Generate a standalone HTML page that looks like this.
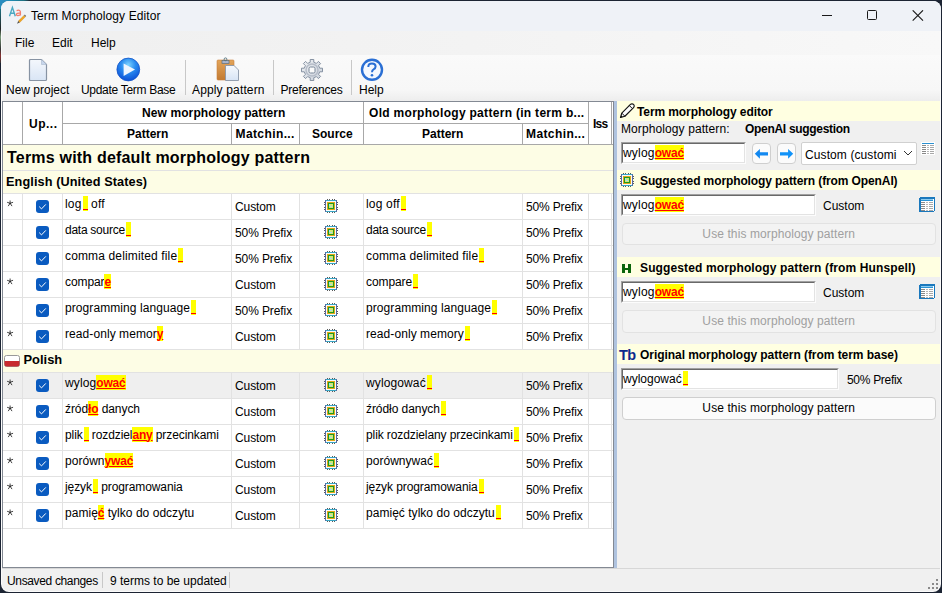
<!DOCTYPE html><html><head><meta charset="utf-8"><style>
*{box-sizing:border-box;margin:0;padding:0}
html,body{width:942px;height:593px;overflow:hidden;background:#1c2433;font-family:"Liberation Sans",sans-serif;font-size:12px;color:#000;position:relative}
.a{position:absolute}
.t{position:absolute;white-space:nowrap}
.b{font-weight:bold}
.hl{background:#ffff00;color:#ff0000;padding:1.2px 0 0.2px;text-decoration:underline;text-decoration-color:#ff0000;text-decoration-thickness:1px;text-underline-offset:0.7px;font-weight:bold;letter-spacing:-0.2px}
.hu{display:inline-block;width:5px;height:0;position:relative;margin-left:1px}
.hu:before{content:"";position:absolute;left:0;top:-12px;width:5px;height:15px;background:#ff0}
.hu:after{content:"";position:absolute;left:0;top:1px;width:5px;height:1px;background:#f00}
</style></head><body>
<div class="a" style="left:0px;top:0px;width:30px;height:1px;background:linear-gradient(90deg,#2a8fc8,#1f8ab0 40%,#1d6f80 80%,#1c2433)"></div>
<div class="a" style="left:0px;top:0px;width:9px;height:9px;background:linear-gradient(135deg,#2a8fc8,#23809f)"></div>
<div class="a" style="left:0px;top:9px;width:1px;height:40px;background:linear-gradient(#1d6f80,#222 50%,#7a9a7a 70%,#333)"></div>
<div class="a" style="left:0px;top:49px;width:1px;height:14px;background:linear-gradient(#333,#8a3030 50%,#333)"></div>
<div class="a" style="left:1px;top:1px;width:940px;height:591px;background:#fbfbfb;border-radius:8px"></div>
<div class="a" style="left:2px;top:1px;width:938px;height:590px;background:#f0f0f0;border-radius:8px 8px 7px 7px"></div>
<div class="a" style="left:1px;top:1px;width:940px;height:30px;background:#eff2f7;border-radius:8px 8px 0 0"></div>
<div class="t " style="left:31px;top:8.84px;line-height:14px;font-size:12px;letter-spacing:0.1px">Term Morphology Editor</div>
<div class="a" style="left:2px;top:31px;width:938px;height:24px;background:linear-gradient(90deg,#efefef,#f3f3f3 50%,#f8f8f8)"></div>
<div class="t " style="left:15px;top:35.84px;line-height:14px;font-size:12px;">File</div>
<div class="t " style="left:52px;top:35.84px;line-height:14px;font-size:12px;">Edit</div>
<div class="t " style="left:91px;top:35.84px;line-height:14px;font-size:12px;">Help</div>
<div class="a" style="left:2px;top:55px;width:938px;height:46px;background:linear-gradient(#fafafa,#f7f7f7 75%,#ededed)"></div>
<div class="t " style="left:6px;top:82.84px;line-height:14px;font-size:12px;">New project</div>
<div class="t " style="left:81px;top:82.84px;line-height:14px;font-size:12px;letter-spacing:-0.3px">Update Term Base</div>
<div class="t " style="left:192px;top:82.84px;line-height:14px;font-size:12px;letter-spacing:0.15px">Apply pattern</div>
<div class="t " style="left:280.5px;top:82.84px;line-height:14px;font-size:12px;letter-spacing:-0.25px">Preferences</div>
<div class="t " style="left:359px;top:82.84px;line-height:14px;font-size:12px;">Help</div>
<svg class="a" style="left:7px;top:5px" width="20" height="20" viewBox="0 0 20 20"><path d="M2.5 11.3 L5.4 2.4 L8.3 11.3 M3.5 8.3 H7.3" fill="none" stroke="#4aa8c2" stroke-width="1.4"/><path d="M9.6 5.6 Q13 4.4 13.4 6.8 V10.6 M13.4 8.2 Q9.3 7.8 9.4 9.6 Q9.8 11.4 13.4 9.8" fill="none" stroke="#f47e6c" stroke-width="1.3"/><path d="M11.3 16.1 L17 10.4 L18.4 11.8 L12.7 17.5 Z" fill="#f2a81e" stroke="#c47a18" stroke-width="0.4"/><path d="M17 10.4 L17.8 9.6 L19.2 11 L18.4 11.8 Z" fill="#6a6a6a"/><path d="M11.3 16.1 L10 18.8 L12.7 17.5 Z" fill="#505050"/></svg>
<div class="a" style="left:822px;top:15px;width:10px;height:1px;background:#1a1a1a"></div>
<div class="a" style="left:867px;top:10px;width:10px;height:10px;border:1px solid #1a1a1a;border-radius:1.5px"></div>
<svg class="a" style="left:912px;top:10px" width="12" height="11" viewBox="0 0 12 11"><path d="M0.7 0.3 L11 10.6 M11 0.3 L0.7 10.6" stroke="#1a1a1a" stroke-width="1.1"/></svg>
<svg class="a" style="left:28px;top:58px" width="20" height="24" viewBox="0 0 20 24"><defs><linearGradient id="pg" x1="0" y1="0" x2="0" y2="1"><stop offset="0" stop-color="#f4f7fc"/><stop offset="1" stop-color="#d9e5f5"/></linearGradient></defs><path d="M1.5 2.5 Q1.5 1.5 2.5 1.5 H13.5 L18.5 6.5 V21.5 Q18.5 22.5 17.5 22.5 H2.5 Q1.5 22.5 1.5 21.5 Z" fill="url(#pg)" stroke="#8793a3" stroke-width="1.2"/><path d="M13.5 1.5 V6.5 H18.5" fill="#c7d6ec" stroke="#a9b8cc" stroke-width="0.6"/></svg>
<svg class="a" style="left:116px;top:57px" width="25" height="25" viewBox="0 0 25 25"><defs><radialGradient id="pl" cx="0.5" cy="0.3" r="0.7"><stop offset="0" stop-color="#7fd4ff"/><stop offset="0.45" stop-color="#2a8cf0"/><stop offset="1" stop-color="#0b4fd6"/></radialGradient></defs><circle cx="12.3" cy="12.5" r="11.4" fill="url(#pl)" stroke="#1556c8" stroke-width="0.8"/><path d="M7.6 6.5 L19 12.6 L7.6 19 Z" fill="#eef5ff"/></svg>
<svg class="a" style="left:216px;top:57px" width="24" height="25" viewBox="0 0 24 25"><defs><linearGradient id="cb" x1="0" y1="0" x2="0" y2="1"><stop offset="0" stop-color="#e3a55a"/><stop offset="1" stop-color="#c27a32"/></linearGradient><linearGradient id="pg2" x1="0" y1="0" x2="0" y2="1"><stop offset="0" stop-color="#f6f9fd"/><stop offset="1" stop-color="#d7e4f5"/></linearGradient></defs><rect x="1" y="3" width="17" height="20" rx="1" fill="url(#cb)" stroke="#c9803c" stroke-width="0.6"/><rect x="6" y="3.5" width="7" height="3" fill="#a9b4cc" stroke="#60707a" stroke-width="0.7"/><circle cx="9.5" cy="2.3" r="1.4" fill="none" stroke="#50707a" stroke-width="0.9"/><path d="M9.5 8.5 H18 L22.5 13 V23.5 H9.5 Z" fill="url(#pg2)" stroke="#8a96a8" stroke-width="0.9"/></svg>
<svg class="a" style="left:300px;top:58px" width="24" height="24" viewBox="0 0 24 24"><defs><linearGradient id="gr" x1="0" y1="0" x2="1" y2="1"><stop offset="0" stop-color="#eef0f3"/><stop offset="1" stop-color="#c9d0da"/></linearGradient></defs><path d="M10.2 1.5 H13.8 V4.3 L16.4 5.4 L18.4 3.4 L20.6 5.6 L18.6 7.6 L19.7 10.2 H22.5 V13.8 H19.7 L18.6 16.4 L20.6 18.4 L18.4 20.6 L16.4 18.6 L13.8 19.7 V22.5 H10.2 V19.7 L7.6 18.6 L5.6 20.6 L3.4 18.4 L5.4 16.4 L4.3 13.8 H1.5 V10.2 H4.3 L5.4 7.6 L3.4 5.6 L5.6 3.4 L7.6 5.4 L10.2 4.3 Z" fill="url(#gr)" stroke="#7b889a" stroke-width="0.9"/><circle cx="12" cy="12" r="6" fill="none" stroke="#b5bcc8" stroke-width="1.5"/><rect x="9" y="9" width="6" height="6" rx="1.5" fill="#fafafa" stroke="#7b889a" stroke-width="1"/></svg>
<svg class="a" style="left:360px;top:58px" width="24" height="24" viewBox="0 0 24 24"><circle cx="12" cy="11.8" r="10" fill="#f4f8fe" stroke="#2a6fd4" stroke-width="2.4"/><path d="M8.3 9 Q8.3 5.6 12 5.6 Q15.6 5.6 15.6 8.6 Q15.6 10.4 13.6 11.4 Q12 12.2 12 14.2" fill="none" stroke="#2a6fd4" stroke-width="2"/><circle cx="12" cy="17.2" r="1.3" fill="#2a6fd4"/></svg>
<div class="a" style="left:185px;top:60px;width:1px;height:35px;background:#c8c8c8"></div>
<div class="a" style="left:273px;top:60px;width:1px;height:35px;background:#c8c8c8"></div>
<div class="a" style="left:351px;top:60px;width:1px;height:35px;background:#c8c8c8"></div>
<div class="a" style="left:2px;top:101px;width:612px;height:467px;background:#fff;border:1px solid #838993"></div>
<div class="a" style="left:3px;top:144px;width:610px;height:1px;background:#a8a8a8"></div>
<div class="a" style="left:62px;top:123px;width:526px;height:1px;background:#a8a8a8"></div>
<div class="a" style="left:22px;top:102px;width:1px;height:42px;background:#a8a8a8"></div>
<div class="a" style="left:62px;top:102px;width:1px;height:42px;background:#a8a8a8"></div>
<div class="a" style="left:231px;top:124px;width:1px;height:20px;background:#a8a8a8"></div>
<div class="a" style="left:299px;top:124px;width:1px;height:20px;background:#a8a8a8"></div>
<div class="a" style="left:363px;top:102px;width:1px;height:42px;background:#a8a8a8"></div>
<div class="a" style="left:522px;top:124px;width:1px;height:20px;background:#a8a8a8"></div>
<div class="a" style="left:588px;top:102px;width:1px;height:42px;background:#a8a8a8"></div>
<div class="a" style="left:611px;top:102px;width:1px;height:42px;background:#a8a8a8"></div>
<div class="t b" style="left:29px;top:116.84px;line-height:14px;font-size:12px;letter-spacing:0.5px">Up...</div>
<div class="t b" style="left:142px;top:105.84px;line-height:14px;font-size:12px;letter-spacing:0.1px">New morphology pattern</div>
<div class="t b" style="left:369px;top:105.84px;line-height:14px;font-size:12px;letter-spacing:0.3px">Old morphology pattern (in term b...</div>
<div class="t b" style="left:127px;top:126.84px;line-height:14px;font-size:12px;">Pattern</div>
<div class="t b" style="left:235.5px;top:126.84px;line-height:14px;font-size:12px;letter-spacing:0.4px">Matchin...</div>
<div class="t b" style="left:312px;top:126.84px;line-height:14px;font-size:12px;">Source</div>
<div class="t b" style="left:422px;top:126.84px;line-height:14px;font-size:12px;">Pattern</div>
<div class="t b" style="left:526px;top:126.84px;line-height:14px;font-size:12px;letter-spacing:0.4px">Matchin...</div>
<div class="t b" style="left:593px;top:116.84px;line-height:14px;font-size:12px;letter-spacing:-0.8px">Iss</div>
<div class="a" style="left:3px;top:145px;width:610px;height:25px;background:#fdfde5"></div>
<div class="a" style="left:3px;top:170px;width:610px;height:1px;background:#e2e2e2"></div>
<div class="t b" style="left:7px;top:149.46px;line-height:18px;font-size:16px;letter-spacing:0.2px">Terms with default morphology pattern</div>
<div class="a" style="left:3px;top:171px;width:610px;height:22px;background:#fdfde5"></div>
<div class="a" style="left:3px;top:193px;width:610px;height:1px;background:#e2e2e2"></div>
<div class="t b" style="left:6px;top:173.60px;line-height:16px;font-size:12.7px;letter-spacing:0.1px">English (United States)</div>
<div class="a" style="left:3px;top:219px;width:610px;height:1px;background:#e2e2e2"></div>
<div class="a" style="left:22px;top:194px;width:1px;height:25px;background:#e2e2e2"></div>
<div class="a" style="left:62px;top:194px;width:1px;height:25px;background:#e2e2e2"></div>
<div class="a" style="left:231px;top:194px;width:1px;height:25px;background:#e2e2e2"></div>
<div class="a" style="left:299px;top:194px;width:1px;height:25px;background:#e2e2e2"></div>
<div class="a" style="left:363px;top:194px;width:1px;height:25px;background:#e2e2e2"></div>
<div class="a" style="left:522px;top:194px;width:1px;height:25px;background:#e2e2e2"></div>
<div class="a" style="left:588px;top:194px;width:1px;height:25px;background:#e2e2e2"></div>
<div class="a" style="left:611px;top:194px;width:1px;height:25px;background:#e2e2e2"></div>
<svg class="a" style="left:6px;top:200px" width="9" height="8" viewBox="0 0 9 8"><path d="M4.1 3.3 V0.9 M4.1 3.3 L1.5 2.4 M4.1 3.3 L6.7 2.4 M4.1 3.3 L2.4 5.8 M4.1 3.3 L5.8 5.8" stroke="#222" stroke-width="0.85" stroke-linecap="round"/></svg>
<svg class="a" style="left:36px;top:200px" width="13" height="13" viewBox="0 0 13 13"><rect x="0" y="0" width="13" height="13" rx="3" fill="#0a5bc0"/><path d="M3.2 6.6 L5.5 8.9 L9.8 4.4" fill="none" stroke="#fff" stroke-width="1"/></svg>
<div class="t " style="left:65px;top:196.84px;line-height:14px;font-size:12px;letter-spacing:0.188px">log<span class="hu"></span> off</div>
<div class="t " style="left:235px;top:199.84px;line-height:14px;font-size:12px;letter-spacing:-0.1px">Custom</div>
<svg class="a" style="left:324px;top:199px" width="14" height="14" viewBox="0 0 14 14" shape-rendering="crispEdges"><path d="M3 0h1v1h-1zM5 0h1v1h-1zM8 0h1v1h-1zM10 0h1v1h-1zM3 13h1v1h-1zM5 13h1v1h-1zM8 13h1v1h-1zM10 13h1v1h-1zM0 3h1v1h-1zM0 5h1v1h-1zM0 8h1v1h-1zM0 10h1v1h-1zM13 3h1v1h-1zM13 5h1v1h-1zM13 8h1v1h-1zM13 10h1v1h-1z" fill="#5a5a5a"/><rect x="1" y="1" width="12" height="12" fill="#5a6aa0"/><rect x="2" y="1" width="10" height="1" fill="#3aa6c4"/><rect x="2" y="12" width="10" height="1" fill="#3aa6c4"/><rect x="2" y="2" width="10" height="10" fill="#fbfbfb"/><rect x="3" y="3" width="8" height="8" fill="#e0a818"/><rect x="4" y="4" width="6" height="6" fill="#209a20"/><rect x="5" y="5" width="4" height="4" fill="#d2e878"/><rect x="5" y="5" width="1" height="2" fill="#9fe3f5"/><rect x="6" y="7" width="2" height="1" fill="#a9dcf0"/></svg>
<div class="t " style="left:366px;top:196.84px;line-height:14px;font-size:12px;letter-spacing:0.188px">log off<span class="hu"></span></div>
<div class="t " style="left:526px;top:199.84px;line-height:14px;font-size:12px;letter-spacing:-0.15px">50% Prefix</div>
<div class="a" style="left:3px;top:245px;width:610px;height:1px;background:#e2e2e2"></div>
<div class="a" style="left:22px;top:220px;width:1px;height:25px;background:#e2e2e2"></div>
<div class="a" style="left:62px;top:220px;width:1px;height:25px;background:#e2e2e2"></div>
<div class="a" style="left:231px;top:220px;width:1px;height:25px;background:#e2e2e2"></div>
<div class="a" style="left:299px;top:220px;width:1px;height:25px;background:#e2e2e2"></div>
<div class="a" style="left:363px;top:220px;width:1px;height:25px;background:#e2e2e2"></div>
<div class="a" style="left:522px;top:220px;width:1px;height:25px;background:#e2e2e2"></div>
<div class="a" style="left:588px;top:220px;width:1px;height:25px;background:#e2e2e2"></div>
<div class="a" style="left:611px;top:220px;width:1px;height:25px;background:#e2e2e2"></div>
<svg class="a" style="left:36px;top:226px" width="13" height="13" viewBox="0 0 13 13"><rect x="0" y="0" width="13" height="13" rx="3" fill="#0a5bc0"/><path d="M3.2 6.6 L5.5 8.9 L9.8 4.4" fill="none" stroke="#fff" stroke-width="1"/></svg>
<div class="t " style="left:65px;top:222.84px;line-height:14px;font-size:12px;letter-spacing:-0.265px">data source<span class="hu"></span></div>
<div class="t " style="left:235px;top:225.84px;line-height:14px;font-size:12px;letter-spacing:-0.1px">50% Prefix</div>
<svg class="a" style="left:324px;top:225px" width="14" height="14" viewBox="0 0 14 14" shape-rendering="crispEdges"><path d="M3 0h1v1h-1zM5 0h1v1h-1zM8 0h1v1h-1zM10 0h1v1h-1zM3 13h1v1h-1zM5 13h1v1h-1zM8 13h1v1h-1zM10 13h1v1h-1zM0 3h1v1h-1zM0 5h1v1h-1zM0 8h1v1h-1zM0 10h1v1h-1zM13 3h1v1h-1zM13 5h1v1h-1zM13 8h1v1h-1zM13 10h1v1h-1z" fill="#5a5a5a"/><rect x="1" y="1" width="12" height="12" fill="#5a6aa0"/><rect x="2" y="1" width="10" height="1" fill="#3aa6c4"/><rect x="2" y="12" width="10" height="1" fill="#3aa6c4"/><rect x="2" y="2" width="10" height="10" fill="#fbfbfb"/><rect x="3" y="3" width="8" height="8" fill="#e0a818"/><rect x="4" y="4" width="6" height="6" fill="#209a20"/><rect x="5" y="5" width="4" height="4" fill="#d2e878"/><rect x="5" y="5" width="1" height="2" fill="#9fe3f5"/><rect x="6" y="7" width="2" height="1" fill="#a9dcf0"/></svg>
<div class="t " style="left:366px;top:222.84px;line-height:14px;font-size:12px;letter-spacing:-0.265px">data source<span class="hu"></span></div>
<div class="t " style="left:526px;top:225.84px;line-height:14px;font-size:12px;letter-spacing:-0.15px">50% Prefix</div>
<div class="a" style="left:3px;top:271px;width:610px;height:1px;background:#e2e2e2"></div>
<div class="a" style="left:22px;top:246px;width:1px;height:25px;background:#e2e2e2"></div>
<div class="a" style="left:62px;top:246px;width:1px;height:25px;background:#e2e2e2"></div>
<div class="a" style="left:231px;top:246px;width:1px;height:25px;background:#e2e2e2"></div>
<div class="a" style="left:299px;top:246px;width:1px;height:25px;background:#e2e2e2"></div>
<div class="a" style="left:363px;top:246px;width:1px;height:25px;background:#e2e2e2"></div>
<div class="a" style="left:522px;top:246px;width:1px;height:25px;background:#e2e2e2"></div>
<div class="a" style="left:588px;top:246px;width:1px;height:25px;background:#e2e2e2"></div>
<div class="a" style="left:611px;top:246px;width:1px;height:25px;background:#e2e2e2"></div>
<svg class="a" style="left:36px;top:252px" width="13" height="13" viewBox="0 0 13 13"><rect x="0" y="0" width="13" height="13" rx="3" fill="#0a5bc0"/><path d="M3.2 6.6 L5.5 8.9 L9.8 4.4" fill="none" stroke="#fff" stroke-width="1"/></svg>
<div class="t " style="left:65px;top:248.84px;line-height:14px;font-size:12px;letter-spacing:0.141px">comma delimited file<span class="hu"></span></div>
<div class="t " style="left:235px;top:251.84px;line-height:14px;font-size:12px;letter-spacing:-0.1px">50% Prefix</div>
<svg class="a" style="left:324px;top:251px" width="14" height="14" viewBox="0 0 14 14" shape-rendering="crispEdges"><path d="M3 0h1v1h-1zM5 0h1v1h-1zM8 0h1v1h-1zM10 0h1v1h-1zM3 13h1v1h-1zM5 13h1v1h-1zM8 13h1v1h-1zM10 13h1v1h-1zM0 3h1v1h-1zM0 5h1v1h-1zM0 8h1v1h-1zM0 10h1v1h-1zM13 3h1v1h-1zM13 5h1v1h-1zM13 8h1v1h-1zM13 10h1v1h-1z" fill="#5a5a5a"/><rect x="1" y="1" width="12" height="12" fill="#5a6aa0"/><rect x="2" y="1" width="10" height="1" fill="#3aa6c4"/><rect x="2" y="12" width="10" height="1" fill="#3aa6c4"/><rect x="2" y="2" width="10" height="10" fill="#fbfbfb"/><rect x="3" y="3" width="8" height="8" fill="#e0a818"/><rect x="4" y="4" width="6" height="6" fill="#209a20"/><rect x="5" y="5" width="4" height="4" fill="#d2e878"/><rect x="5" y="5" width="1" height="2" fill="#9fe3f5"/><rect x="6" y="7" width="2" height="1" fill="#a9dcf0"/></svg>
<div class="t " style="left:366px;top:248.84px;line-height:14px;font-size:12px;letter-spacing:0.141px">comma delimited file<span class="hu"></span></div>
<div class="t " style="left:526px;top:251.84px;line-height:14px;font-size:12px;letter-spacing:-0.15px">50% Prefix</div>
<div class="a" style="left:3px;top:297px;width:610px;height:1px;background:#e2e2e2"></div>
<div class="a" style="left:22px;top:272px;width:1px;height:25px;background:#e2e2e2"></div>
<div class="a" style="left:62px;top:272px;width:1px;height:25px;background:#e2e2e2"></div>
<div class="a" style="left:231px;top:272px;width:1px;height:25px;background:#e2e2e2"></div>
<div class="a" style="left:299px;top:272px;width:1px;height:25px;background:#e2e2e2"></div>
<div class="a" style="left:363px;top:272px;width:1px;height:25px;background:#e2e2e2"></div>
<div class="a" style="left:522px;top:272px;width:1px;height:25px;background:#e2e2e2"></div>
<div class="a" style="left:588px;top:272px;width:1px;height:25px;background:#e2e2e2"></div>
<div class="a" style="left:611px;top:272px;width:1px;height:25px;background:#e2e2e2"></div>
<svg class="a" style="left:6px;top:278px" width="9" height="8" viewBox="0 0 9 8"><path d="M4.1 3.3 V0.9 M4.1 3.3 L1.5 2.4 M4.1 3.3 L6.7 2.4 M4.1 3.3 L2.4 5.8 M4.1 3.3 L5.8 5.8" stroke="#222" stroke-width="0.85" stroke-linecap="round"/></svg>
<svg class="a" style="left:36px;top:278px" width="13" height="13" viewBox="0 0 13 13"><rect x="0" y="0" width="13" height="13" rx="3" fill="#0a5bc0"/><path d="M3.2 6.6 L5.5 8.9 L9.8 4.4" fill="none" stroke="#fff" stroke-width="1"/></svg>
<div class="t " style="left:65px;top:274.84px;line-height:14px;font-size:12px;letter-spacing:-0.098px">compar<span class="hl">e</span></div>
<div class="t " style="left:235px;top:277.84px;line-height:14px;font-size:12px;letter-spacing:-0.1px">Custom</div>
<svg class="a" style="left:324px;top:277px" width="14" height="14" viewBox="0 0 14 14" shape-rendering="crispEdges"><path d="M3 0h1v1h-1zM5 0h1v1h-1zM8 0h1v1h-1zM10 0h1v1h-1zM3 13h1v1h-1zM5 13h1v1h-1zM8 13h1v1h-1zM10 13h1v1h-1zM0 3h1v1h-1zM0 5h1v1h-1zM0 8h1v1h-1zM0 10h1v1h-1zM13 3h1v1h-1zM13 5h1v1h-1zM13 8h1v1h-1zM13 10h1v1h-1z" fill="#5a5a5a"/><rect x="1" y="1" width="12" height="12" fill="#5a6aa0"/><rect x="2" y="1" width="10" height="1" fill="#3aa6c4"/><rect x="2" y="12" width="10" height="1" fill="#3aa6c4"/><rect x="2" y="2" width="10" height="10" fill="#fbfbfb"/><rect x="3" y="3" width="8" height="8" fill="#e0a818"/><rect x="4" y="4" width="6" height="6" fill="#209a20"/><rect x="5" y="5" width="4" height="4" fill="#d2e878"/><rect x="5" y="5" width="1" height="2" fill="#9fe3f5"/><rect x="6" y="7" width="2" height="1" fill="#a9dcf0"/></svg>
<div class="t " style="left:366px;top:274.84px;line-height:14px;font-size:12px;letter-spacing:-0.098px">compare<span class="hu"></span></div>
<div class="t " style="left:526px;top:277.84px;line-height:14px;font-size:12px;letter-spacing:-0.15px">50% Prefix</div>
<div class="a" style="left:3px;top:323px;width:610px;height:1px;background:#e2e2e2"></div>
<div class="a" style="left:22px;top:298px;width:1px;height:25px;background:#e2e2e2"></div>
<div class="a" style="left:62px;top:298px;width:1px;height:25px;background:#e2e2e2"></div>
<div class="a" style="left:231px;top:298px;width:1px;height:25px;background:#e2e2e2"></div>
<div class="a" style="left:299px;top:298px;width:1px;height:25px;background:#e2e2e2"></div>
<div class="a" style="left:363px;top:298px;width:1px;height:25px;background:#e2e2e2"></div>
<div class="a" style="left:522px;top:298px;width:1px;height:25px;background:#e2e2e2"></div>
<div class="a" style="left:588px;top:298px;width:1px;height:25px;background:#e2e2e2"></div>
<div class="a" style="left:611px;top:298px;width:1px;height:25px;background:#e2e2e2"></div>
<svg class="a" style="left:36px;top:304px" width="13" height="13" viewBox="0 0 13 13"><rect x="0" y="0" width="13" height="13" rx="3" fill="#0a5bc0"/><path d="M3.2 6.6 L5.5 8.9 L9.8 4.4" fill="none" stroke="#fff" stroke-width="1"/></svg>
<div class="t " style="left:65px;top:300.84px;line-height:14px;font-size:12px;letter-spacing:0.079px">programming language<span class="hu"></span></div>
<div class="t " style="left:235px;top:303.84px;line-height:14px;font-size:12px;letter-spacing:-0.1px">50% Prefix</div>
<svg class="a" style="left:324px;top:303px" width="14" height="14" viewBox="0 0 14 14" shape-rendering="crispEdges"><path d="M3 0h1v1h-1zM5 0h1v1h-1zM8 0h1v1h-1zM10 0h1v1h-1zM3 13h1v1h-1zM5 13h1v1h-1zM8 13h1v1h-1zM10 13h1v1h-1zM0 3h1v1h-1zM0 5h1v1h-1zM0 8h1v1h-1zM0 10h1v1h-1zM13 3h1v1h-1zM13 5h1v1h-1zM13 8h1v1h-1zM13 10h1v1h-1z" fill="#5a5a5a"/><rect x="1" y="1" width="12" height="12" fill="#5a6aa0"/><rect x="2" y="1" width="10" height="1" fill="#3aa6c4"/><rect x="2" y="12" width="10" height="1" fill="#3aa6c4"/><rect x="2" y="2" width="10" height="10" fill="#fbfbfb"/><rect x="3" y="3" width="8" height="8" fill="#e0a818"/><rect x="4" y="4" width="6" height="6" fill="#209a20"/><rect x="5" y="5" width="4" height="4" fill="#d2e878"/><rect x="5" y="5" width="1" height="2" fill="#9fe3f5"/><rect x="6" y="7" width="2" height="1" fill="#a9dcf0"/></svg>
<div class="t " style="left:366px;top:300.84px;line-height:14px;font-size:12px;letter-spacing:0.079px">programming language<span class="hu"></span></div>
<div class="t " style="left:526px;top:303.84px;line-height:14px;font-size:12px;letter-spacing:-0.15px">50% Prefix</div>
<div class="a" style="left:3px;top:349px;width:610px;height:1px;background:#e2e2e2"></div>
<div class="a" style="left:22px;top:324px;width:1px;height:25px;background:#e2e2e2"></div>
<div class="a" style="left:62px;top:324px;width:1px;height:25px;background:#e2e2e2"></div>
<div class="a" style="left:231px;top:324px;width:1px;height:25px;background:#e2e2e2"></div>
<div class="a" style="left:299px;top:324px;width:1px;height:25px;background:#e2e2e2"></div>
<div class="a" style="left:363px;top:324px;width:1px;height:25px;background:#e2e2e2"></div>
<div class="a" style="left:522px;top:324px;width:1px;height:25px;background:#e2e2e2"></div>
<div class="a" style="left:588px;top:324px;width:1px;height:25px;background:#e2e2e2"></div>
<div class="a" style="left:611px;top:324px;width:1px;height:25px;background:#e2e2e2"></div>
<svg class="a" style="left:6px;top:330px" width="9" height="8" viewBox="0 0 9 8"><path d="M4.1 3.3 V0.9 M4.1 3.3 L1.5 2.4 M4.1 3.3 L6.7 2.4 M4.1 3.3 L2.4 5.8 M4.1 3.3 L5.8 5.8" stroke="#222" stroke-width="0.85" stroke-linecap="round"/></svg>
<svg class="a" style="left:36px;top:330px" width="13" height="13" viewBox="0 0 13 13"><rect x="0" y="0" width="13" height="13" rx="3" fill="#0a5bc0"/><path d="M3.2 6.6 L5.5 8.9 L9.8 4.4" fill="none" stroke="#fff" stroke-width="1"/></svg>
<div class="t " style="left:65px;top:326.84px;line-height:14px;font-size:12px;letter-spacing:0.075px">read-only memor<span class="hl">y</span></div>
<div class="t " style="left:235px;top:329.84px;line-height:14px;font-size:12px;letter-spacing:-0.1px">Custom</div>
<svg class="a" style="left:324px;top:329px" width="14" height="14" viewBox="0 0 14 14" shape-rendering="crispEdges"><path d="M3 0h1v1h-1zM5 0h1v1h-1zM8 0h1v1h-1zM10 0h1v1h-1zM3 13h1v1h-1zM5 13h1v1h-1zM8 13h1v1h-1zM10 13h1v1h-1zM0 3h1v1h-1zM0 5h1v1h-1zM0 8h1v1h-1zM0 10h1v1h-1zM13 3h1v1h-1zM13 5h1v1h-1zM13 8h1v1h-1zM13 10h1v1h-1z" fill="#5a5a5a"/><rect x="1" y="1" width="12" height="12" fill="#5a6aa0"/><rect x="2" y="1" width="10" height="1" fill="#3aa6c4"/><rect x="2" y="12" width="10" height="1" fill="#3aa6c4"/><rect x="2" y="2" width="10" height="10" fill="#fbfbfb"/><rect x="3" y="3" width="8" height="8" fill="#e0a818"/><rect x="4" y="4" width="6" height="6" fill="#209a20"/><rect x="5" y="5" width="4" height="4" fill="#d2e878"/><rect x="5" y="5" width="1" height="2" fill="#9fe3f5"/><rect x="6" y="7" width="2" height="1" fill="#a9dcf0"/></svg>
<div class="t " style="left:366px;top:326.84px;line-height:14px;font-size:12px;letter-spacing:0.075px">read-only memory<span class="hu"></span></div>
<div class="t " style="left:526px;top:329.84px;line-height:14px;font-size:12px;letter-spacing:-0.15px">50% Prefix</div>
<div class="a" style="left:3px;top:350px;width:610px;height:22px;background:#fdfde5"></div>
<div class="a" style="left:3px;top:372px;width:610px;height:1px;background:#e2e2e2"></div>
<svg class="a" style="left:4px;top:355px" width="16" height="12" viewBox="0 0 16 12"><rect x="0.5" y="0.5" width="15" height="11" rx="2" fill="#fff" stroke="#999"/><path d="M0.5 6 H15.5 V9.5 a2 2 0 0 1 -2 2 H2.5 a2 2 0 0 1 -2 -2 Z" fill="#c82a2f"/></svg>
<div class="t b" style="left:23.5px;top:352.23px;line-height:16px;font-size:12.9px;">Polish</div>
<div class="a" style="left:3px;top:373px;width:610px;height:25px;background:#efefef"></div>
<div class="a" style="left:3px;top:398px;width:610px;height:1px;background:#e2e2e2"></div>
<div class="a" style="left:22px;top:373px;width:1px;height:25px;background:#e2e2e2"></div>
<div class="a" style="left:62px;top:373px;width:1px;height:25px;background:#e2e2e2"></div>
<div class="a" style="left:231px;top:373px;width:1px;height:25px;background:#e2e2e2"></div>
<div class="a" style="left:299px;top:373px;width:1px;height:25px;background:#e2e2e2"></div>
<div class="a" style="left:363px;top:373px;width:1px;height:25px;background:#e2e2e2"></div>
<div class="a" style="left:522px;top:373px;width:1px;height:25px;background:#e2e2e2"></div>
<div class="a" style="left:588px;top:373px;width:1px;height:25px;background:#e2e2e2"></div>
<div class="a" style="left:611px;top:373px;width:1px;height:25px;background:#e2e2e2"></div>
<svg class="a" style="left:6px;top:379px" width="9" height="8" viewBox="0 0 9 8"><path d="M4.1 3.3 V0.9 M4.1 3.3 L1.5 2.4 M4.1 3.3 L6.7 2.4 M4.1 3.3 L2.4 5.8 M4.1 3.3 L5.8 5.8" stroke="#222" stroke-width="0.85" stroke-linecap="round"/></svg>
<svg class="a" style="left:36px;top:379px" width="13" height="13" viewBox="0 0 13 13"><rect x="0" y="0" width="13" height="13" rx="3" fill="#0a5bc0"/><path d="M3.2 6.6 L5.5 8.9 L9.8 4.4" fill="none" stroke="#fff" stroke-width="1"/></svg>
<div class="t " style="left:65px;top:375.84px;line-height:14px;font-size:12px;letter-spacing:0.12px">wylog<span class="hl">ować</span></div>
<div class="t " style="left:235px;top:378.84px;line-height:14px;font-size:12px;letter-spacing:-0.1px">Custom</div>
<svg class="a" style="left:324px;top:378px" width="14" height="14" viewBox="0 0 14 14" shape-rendering="crispEdges"><path d="M3 0h1v1h-1zM5 0h1v1h-1zM8 0h1v1h-1zM10 0h1v1h-1zM3 13h1v1h-1zM5 13h1v1h-1zM8 13h1v1h-1zM10 13h1v1h-1zM0 3h1v1h-1zM0 5h1v1h-1zM0 8h1v1h-1zM0 10h1v1h-1zM13 3h1v1h-1zM13 5h1v1h-1zM13 8h1v1h-1zM13 10h1v1h-1z" fill="#5a5a5a"/><rect x="1" y="1" width="12" height="12" fill="#5a6aa0"/><rect x="2" y="1" width="10" height="1" fill="#3aa6c4"/><rect x="2" y="12" width="10" height="1" fill="#3aa6c4"/><rect x="2" y="2" width="10" height="10" fill="#fbfbfb"/><rect x="3" y="3" width="8" height="8" fill="#e0a818"/><rect x="4" y="4" width="6" height="6" fill="#209a20"/><rect x="5" y="5" width="4" height="4" fill="#d2e878"/><rect x="5" y="5" width="1" height="2" fill="#9fe3f5"/><rect x="6" y="7" width="2" height="1" fill="#a9dcf0"/></svg>
<div class="t " style="left:366px;top:375.84px;line-height:14px;font-size:12px;letter-spacing:0.12px">wylogować<span class="hu"></span></div>
<div class="t " style="left:526px;top:378.84px;line-height:14px;font-size:12px;letter-spacing:-0.15px">50% Prefix</div>
<div class="a" style="left:3px;top:424px;width:610px;height:1px;background:#e2e2e2"></div>
<div class="a" style="left:22px;top:399px;width:1px;height:25px;background:#e2e2e2"></div>
<div class="a" style="left:62px;top:399px;width:1px;height:25px;background:#e2e2e2"></div>
<div class="a" style="left:231px;top:399px;width:1px;height:25px;background:#e2e2e2"></div>
<div class="a" style="left:299px;top:399px;width:1px;height:25px;background:#e2e2e2"></div>
<div class="a" style="left:363px;top:399px;width:1px;height:25px;background:#e2e2e2"></div>
<div class="a" style="left:522px;top:399px;width:1px;height:25px;background:#e2e2e2"></div>
<div class="a" style="left:588px;top:399px;width:1px;height:25px;background:#e2e2e2"></div>
<div class="a" style="left:611px;top:399px;width:1px;height:25px;background:#e2e2e2"></div>
<svg class="a" style="left:6px;top:405px" width="9" height="8" viewBox="0 0 9 8"><path d="M4.1 3.3 V0.9 M4.1 3.3 L1.5 2.4 M4.1 3.3 L6.7 2.4 M4.1 3.3 L2.4 5.8 M4.1 3.3 L5.8 5.8" stroke="#222" stroke-width="0.85" stroke-linecap="round"/></svg>
<svg class="a" style="left:36px;top:405px" width="13" height="13" viewBox="0 0 13 13"><rect x="0" y="0" width="13" height="13" rx="3" fill="#0a5bc0"/><path d="M3.2 6.6 L5.5 8.9 L9.8 4.4" fill="none" stroke="#fff" stroke-width="1"/></svg>
<div class="t " style="left:65px;top:401.84px;line-height:14px;font-size:12px;letter-spacing:-0.063px">źród<span class="hl">ło</span> danych</div>
<div class="t " style="left:235px;top:404.84px;line-height:14px;font-size:12px;letter-spacing:-0.1px">Custom</div>
<svg class="a" style="left:324px;top:404px" width="14" height="14" viewBox="0 0 14 14" shape-rendering="crispEdges"><path d="M3 0h1v1h-1zM5 0h1v1h-1zM8 0h1v1h-1zM10 0h1v1h-1zM3 13h1v1h-1zM5 13h1v1h-1zM8 13h1v1h-1zM10 13h1v1h-1zM0 3h1v1h-1zM0 5h1v1h-1zM0 8h1v1h-1zM0 10h1v1h-1zM13 3h1v1h-1zM13 5h1v1h-1zM13 8h1v1h-1zM13 10h1v1h-1z" fill="#5a5a5a"/><rect x="1" y="1" width="12" height="12" fill="#5a6aa0"/><rect x="2" y="1" width="10" height="1" fill="#3aa6c4"/><rect x="2" y="12" width="10" height="1" fill="#3aa6c4"/><rect x="2" y="2" width="10" height="10" fill="#fbfbfb"/><rect x="3" y="3" width="8" height="8" fill="#e0a818"/><rect x="4" y="4" width="6" height="6" fill="#209a20"/><rect x="5" y="5" width="4" height="4" fill="#d2e878"/><rect x="5" y="5" width="1" height="2" fill="#9fe3f5"/><rect x="6" y="7" width="2" height="1" fill="#a9dcf0"/></svg>
<div class="t " style="left:366px;top:401.84px;line-height:14px;font-size:12px;letter-spacing:-0.063px">źródło danych<span class="hu"></span></div>
<div class="t " style="left:526px;top:404.84px;line-height:14px;font-size:12px;letter-spacing:-0.15px">50% Prefix</div>
<div class="a" style="left:3px;top:450px;width:610px;height:1px;background:#e2e2e2"></div>
<div class="a" style="left:22px;top:425px;width:1px;height:25px;background:#e2e2e2"></div>
<div class="a" style="left:62px;top:425px;width:1px;height:25px;background:#e2e2e2"></div>
<div class="a" style="left:231px;top:425px;width:1px;height:25px;background:#e2e2e2"></div>
<div class="a" style="left:299px;top:425px;width:1px;height:25px;background:#e2e2e2"></div>
<div class="a" style="left:363px;top:425px;width:1px;height:25px;background:#e2e2e2"></div>
<div class="a" style="left:522px;top:425px;width:1px;height:25px;background:#e2e2e2"></div>
<div class="a" style="left:588px;top:425px;width:1px;height:25px;background:#e2e2e2"></div>
<div class="a" style="left:611px;top:425px;width:1px;height:25px;background:#e2e2e2"></div>
<svg class="a" style="left:6px;top:431px" width="9" height="8" viewBox="0 0 9 8"><path d="M4.1 3.3 V0.9 M4.1 3.3 L1.5 2.4 M4.1 3.3 L6.7 2.4 M4.1 3.3 L2.4 5.8 M4.1 3.3 L5.8 5.8" stroke="#222" stroke-width="0.85" stroke-linecap="round"/></svg>
<svg class="a" style="left:36px;top:431px" width="13" height="13" viewBox="0 0 13 13"><rect x="0" y="0" width="13" height="13" rx="3" fill="#0a5bc0"/><path d="M3.2 6.6 L5.5 8.9 L9.8 4.4" fill="none" stroke="#fff" stroke-width="1"/></svg>
<div class="t " style="left:65px;top:427.84px;line-height:14px;font-size:12px;letter-spacing:-0.096px">plik<span class="hu"></span> rozdziel<span class="hl">any</span> przecinkami</div>
<div class="t " style="left:235px;top:430.84px;line-height:14px;font-size:12px;letter-spacing:-0.1px">Custom</div>
<svg class="a" style="left:324px;top:430px" width="14" height="14" viewBox="0 0 14 14" shape-rendering="crispEdges"><path d="M3 0h1v1h-1zM5 0h1v1h-1zM8 0h1v1h-1zM10 0h1v1h-1zM3 13h1v1h-1zM5 13h1v1h-1zM8 13h1v1h-1zM10 13h1v1h-1zM0 3h1v1h-1zM0 5h1v1h-1zM0 8h1v1h-1zM0 10h1v1h-1zM13 3h1v1h-1zM13 5h1v1h-1zM13 8h1v1h-1zM13 10h1v1h-1z" fill="#5a5a5a"/><rect x="1" y="1" width="12" height="12" fill="#5a6aa0"/><rect x="2" y="1" width="10" height="1" fill="#3aa6c4"/><rect x="2" y="12" width="10" height="1" fill="#3aa6c4"/><rect x="2" y="2" width="10" height="10" fill="#fbfbfb"/><rect x="3" y="3" width="8" height="8" fill="#e0a818"/><rect x="4" y="4" width="6" height="6" fill="#209a20"/><rect x="5" y="5" width="4" height="4" fill="#d2e878"/><rect x="5" y="5" width="1" height="2" fill="#9fe3f5"/><rect x="6" y="7" width="2" height="1" fill="#a9dcf0"/></svg>
<div class="t " style="left:366px;top:427.84px;line-height:14px;font-size:12px;letter-spacing:-0.096px">plik rozdzielany przecinkami<span class="hu"></span></div>
<div class="t " style="left:526px;top:430.84px;line-height:14px;font-size:12px;letter-spacing:-0.15px">50% Prefix</div>
<div class="a" style="left:3px;top:476px;width:610px;height:1px;background:#e2e2e2"></div>
<div class="a" style="left:22px;top:451px;width:1px;height:25px;background:#e2e2e2"></div>
<div class="a" style="left:62px;top:451px;width:1px;height:25px;background:#e2e2e2"></div>
<div class="a" style="left:231px;top:451px;width:1px;height:25px;background:#e2e2e2"></div>
<div class="a" style="left:299px;top:451px;width:1px;height:25px;background:#e2e2e2"></div>
<div class="a" style="left:363px;top:451px;width:1px;height:25px;background:#e2e2e2"></div>
<div class="a" style="left:522px;top:451px;width:1px;height:25px;background:#e2e2e2"></div>
<div class="a" style="left:588px;top:451px;width:1px;height:25px;background:#e2e2e2"></div>
<div class="a" style="left:611px;top:451px;width:1px;height:25px;background:#e2e2e2"></div>
<svg class="a" style="left:6px;top:457px" width="9" height="8" viewBox="0 0 9 8"><path d="M4.1 3.3 V0.9 M4.1 3.3 L1.5 2.4 M4.1 3.3 L6.7 2.4 M4.1 3.3 L2.4 5.8 M4.1 3.3 L5.8 5.8" stroke="#222" stroke-width="0.85" stroke-linecap="round"/></svg>
<svg class="a" style="left:36px;top:457px" width="13" height="13" viewBox="0 0 13 13"><rect x="0" y="0" width="13" height="13" rx="3" fill="#0a5bc0"/><path d="M3.2 6.6 L5.5 8.9 L9.8 4.4" fill="none" stroke="#fff" stroke-width="1"/></svg>
<div class="t " style="left:65px;top:453.84px;line-height:14px;font-size:12px;letter-spacing:0.03px">porówn<span class="hl">ywać</span></div>
<div class="t " style="left:235px;top:456.84px;line-height:14px;font-size:12px;letter-spacing:-0.1px">Custom</div>
<svg class="a" style="left:324px;top:456px" width="14" height="14" viewBox="0 0 14 14" shape-rendering="crispEdges"><path d="M3 0h1v1h-1zM5 0h1v1h-1zM8 0h1v1h-1zM10 0h1v1h-1zM3 13h1v1h-1zM5 13h1v1h-1zM8 13h1v1h-1zM10 13h1v1h-1zM0 3h1v1h-1zM0 5h1v1h-1zM0 8h1v1h-1zM0 10h1v1h-1zM13 3h1v1h-1zM13 5h1v1h-1zM13 8h1v1h-1zM13 10h1v1h-1z" fill="#5a5a5a"/><rect x="1" y="1" width="12" height="12" fill="#5a6aa0"/><rect x="2" y="1" width="10" height="1" fill="#3aa6c4"/><rect x="2" y="12" width="10" height="1" fill="#3aa6c4"/><rect x="2" y="2" width="10" height="10" fill="#fbfbfb"/><rect x="3" y="3" width="8" height="8" fill="#e0a818"/><rect x="4" y="4" width="6" height="6" fill="#209a20"/><rect x="5" y="5" width="4" height="4" fill="#d2e878"/><rect x="5" y="5" width="1" height="2" fill="#9fe3f5"/><rect x="6" y="7" width="2" height="1" fill="#a9dcf0"/></svg>
<div class="t " style="left:366px;top:453.84px;line-height:14px;font-size:12px;letter-spacing:0.03px">porównywać<span class="hu"></span></div>
<div class="t " style="left:526px;top:456.84px;line-height:14px;font-size:12px;letter-spacing:-0.15px">50% Prefix</div>
<div class="a" style="left:3px;top:502px;width:610px;height:1px;background:#e2e2e2"></div>
<div class="a" style="left:22px;top:477px;width:1px;height:25px;background:#e2e2e2"></div>
<div class="a" style="left:62px;top:477px;width:1px;height:25px;background:#e2e2e2"></div>
<div class="a" style="left:231px;top:477px;width:1px;height:25px;background:#e2e2e2"></div>
<div class="a" style="left:299px;top:477px;width:1px;height:25px;background:#e2e2e2"></div>
<div class="a" style="left:363px;top:477px;width:1px;height:25px;background:#e2e2e2"></div>
<div class="a" style="left:522px;top:477px;width:1px;height:25px;background:#e2e2e2"></div>
<div class="a" style="left:588px;top:477px;width:1px;height:25px;background:#e2e2e2"></div>
<div class="a" style="left:611px;top:477px;width:1px;height:25px;background:#e2e2e2"></div>
<svg class="a" style="left:6px;top:483px" width="9" height="8" viewBox="0 0 9 8"><path d="M4.1 3.3 V0.9 M4.1 3.3 L1.5 2.4 M4.1 3.3 L6.7 2.4 M4.1 3.3 L2.4 5.8 M4.1 3.3 L5.8 5.8" stroke="#222" stroke-width="0.85" stroke-linecap="round"/></svg>
<svg class="a" style="left:36px;top:483px" width="13" height="13" viewBox="0 0 13 13"><rect x="0" y="0" width="13" height="13" rx="3" fill="#0a5bc0"/><path d="M3.2 6.6 L5.5 8.9 L9.8 4.4" fill="none" stroke="#fff" stroke-width="1"/></svg>
<div class="t " style="left:65px;top:479.84px;line-height:14px;font-size:12px;letter-spacing:-0.089px">język<span class="hu"></span> programowania</div>
<div class="t " style="left:235px;top:482.84px;line-height:14px;font-size:12px;letter-spacing:-0.1px">Custom</div>
<svg class="a" style="left:324px;top:482px" width="14" height="14" viewBox="0 0 14 14" shape-rendering="crispEdges"><path d="M3 0h1v1h-1zM5 0h1v1h-1zM8 0h1v1h-1zM10 0h1v1h-1zM3 13h1v1h-1zM5 13h1v1h-1zM8 13h1v1h-1zM10 13h1v1h-1zM0 3h1v1h-1zM0 5h1v1h-1zM0 8h1v1h-1zM0 10h1v1h-1zM13 3h1v1h-1zM13 5h1v1h-1zM13 8h1v1h-1zM13 10h1v1h-1z" fill="#5a5a5a"/><rect x="1" y="1" width="12" height="12" fill="#5a6aa0"/><rect x="2" y="1" width="10" height="1" fill="#3aa6c4"/><rect x="2" y="12" width="10" height="1" fill="#3aa6c4"/><rect x="2" y="2" width="10" height="10" fill="#fbfbfb"/><rect x="3" y="3" width="8" height="8" fill="#e0a818"/><rect x="4" y="4" width="6" height="6" fill="#209a20"/><rect x="5" y="5" width="4" height="4" fill="#d2e878"/><rect x="5" y="5" width="1" height="2" fill="#9fe3f5"/><rect x="6" y="7" width="2" height="1" fill="#a9dcf0"/></svg>
<div class="t " style="left:366px;top:479.84px;line-height:14px;font-size:12px;letter-spacing:-0.089px">język programowania<span class="hu"></span></div>
<div class="t " style="left:526px;top:482.84px;line-height:14px;font-size:12px;letter-spacing:-0.15px">50% Prefix</div>
<div class="a" style="left:3px;top:528px;width:610px;height:1px;background:#e2e2e2"></div>
<div class="a" style="left:22px;top:503px;width:1px;height:25px;background:#e2e2e2"></div>
<div class="a" style="left:62px;top:503px;width:1px;height:25px;background:#e2e2e2"></div>
<div class="a" style="left:231px;top:503px;width:1px;height:25px;background:#e2e2e2"></div>
<div class="a" style="left:299px;top:503px;width:1px;height:25px;background:#e2e2e2"></div>
<div class="a" style="left:363px;top:503px;width:1px;height:25px;background:#e2e2e2"></div>
<div class="a" style="left:522px;top:503px;width:1px;height:25px;background:#e2e2e2"></div>
<div class="a" style="left:588px;top:503px;width:1px;height:25px;background:#e2e2e2"></div>
<div class="a" style="left:611px;top:503px;width:1px;height:25px;background:#e2e2e2"></div>
<svg class="a" style="left:6px;top:509px" width="9" height="8" viewBox="0 0 9 8"><path d="M4.1 3.3 V0.9 M4.1 3.3 L1.5 2.4 M4.1 3.3 L6.7 2.4 M4.1 3.3 L2.4 5.8 M4.1 3.3 L5.8 5.8" stroke="#222" stroke-width="0.85" stroke-linecap="round"/></svg>
<svg class="a" style="left:36px;top:509px" width="13" height="13" viewBox="0 0 13 13"><rect x="0" y="0" width="13" height="13" rx="3" fill="#0a5bc0"/><path d="M3.2 6.6 L5.5 8.9 L9.8 4.4" fill="none" stroke="#fff" stroke-width="1"/></svg>
<div class="t " style="left:65px;top:505.84px;line-height:14px;font-size:12px;letter-spacing:0.032px">pamię<span class="hl">ć</span> tylko do odczytu</div>
<div class="t " style="left:235px;top:508.84px;line-height:14px;font-size:12px;letter-spacing:-0.1px">Custom</div>
<svg class="a" style="left:324px;top:508px" width="14" height="14" viewBox="0 0 14 14" shape-rendering="crispEdges"><path d="M3 0h1v1h-1zM5 0h1v1h-1zM8 0h1v1h-1zM10 0h1v1h-1zM3 13h1v1h-1zM5 13h1v1h-1zM8 13h1v1h-1zM10 13h1v1h-1zM0 3h1v1h-1zM0 5h1v1h-1zM0 8h1v1h-1zM0 10h1v1h-1zM13 3h1v1h-1zM13 5h1v1h-1zM13 8h1v1h-1zM13 10h1v1h-1z" fill="#5a5a5a"/><rect x="1" y="1" width="12" height="12" fill="#5a6aa0"/><rect x="2" y="1" width="10" height="1" fill="#3aa6c4"/><rect x="2" y="12" width="10" height="1" fill="#3aa6c4"/><rect x="2" y="2" width="10" height="10" fill="#fbfbfb"/><rect x="3" y="3" width="8" height="8" fill="#e0a818"/><rect x="4" y="4" width="6" height="6" fill="#209a20"/><rect x="5" y="5" width="4" height="4" fill="#d2e878"/><rect x="5" y="5" width="1" height="2" fill="#9fe3f5"/><rect x="6" y="7" width="2" height="1" fill="#a9dcf0"/></svg>
<div class="t " style="left:366px;top:505.84px;line-height:14px;font-size:12px;letter-spacing:0.032px">pamięć tylko do odczytu<span class="hu"></span></div>
<div class="t " style="left:526px;top:508.84px;line-height:14px;font-size:12px;letter-spacing:-0.15px">50% Prefix</div>
<div class="a" style="left:614px;top:101px;width:3px;height:467px;background:#afc3df"></div>
<div class="a" style="left:617px;top:101px;width:323px;height:20px;background:#ffffe1"></div>
<svg class="a" style="left:619px;top:103px" width="16" height="16" viewBox="0 0 16 16"><path d="M1.5 14.5 L2.78 10.12 L11.45 1.45 A2.19 2.19 0 0 1 14.55 4.55 L5.88 13.22 Z" fill="#fff" stroke="#111" stroke-width="1.15" stroke-linejoin="round"/><path d="M2.78 10.12 L5.88 13.22 M10.35 2.55 L13.45 5.65" fill="none" stroke="#111" stroke-width="1"/><path d="M1.5 14.5 L2.1 12.2 L3.8 13.9 Z" fill="#111"/></svg>
<div class="t b" style="left:637px;top:104.84px;line-height:14px;font-size:12px;letter-spacing:-0.1px">Term morphology editor</div>
<div class="t " style="left:621px;top:121.84px;line-height:14px;font-size:12px;letter-spacing:0.1px">Morphology pattern:</div>
<div class="t b" style="left:745px;top:121.84px;line-height:14px;font-size:12px;letter-spacing:-0.3px">OpenAI suggestion</div>
<div class="a" style="left:621px;top:142px;width:125px;height:22px;background:#fff;border-top:1px solid #a0a0a0;border-left:1px solid #a0a0a0;border-right:1px solid #fcfcfc;border-bottom:1px solid #fcfcfc"></div>
<div class="a" style="left:622px;top:143px;width:123px;height:20px;border-top:1px solid #696969;border-left:1px solid #696969;border-right:1px solid #e3e3e3;border-bottom:1px solid #e3e3e3"></div>
<div class="t " style="left:623px;top:145.84px;line-height:14px;font-size:12px;letter-spacing:0.2px">wylog<span class="hl">ować</span></div>
<div class="a" style="left:752px;top:143px;width:19px;height:21px;background:#fbfbfb;border:1px solid #cfcfcf;border-radius:4px"></div>
<div class="t" style="left:752px;width:19px;top:147px;line-height:14px;text-align:center;letter-spacing:0.1px;text-indent:-0.5px;color:#000"></div>
<div class="a" style="left:777px;top:143px;width:19px;height:21px;background:#fbfbfb;border:1px solid #cfcfcf;border-radius:4px"></div>
<div class="t" style="left:777px;width:19px;top:147px;line-height:14px;text-align:center;letter-spacing:0.1px;text-indent:-0.5px;color:#000"></div>
<svg class="a" style="left:754px;top:148px" width="15" height="12" viewBox="0 0 15 12"><path d="M0.8 5.8 L5.9 0.9 V4.2 H14 V7.6 H5.9 V10.7 Z" fill="#1288f0"/></svg>
<svg class="a" style="left:779px;top:148px" width="15" height="12" viewBox="0 0 15 12"><path d="M14.2 5.8 L9.1 0.9 V4.2 H1 V7.6 H9.1 V10.7 Z" fill="#1092f8"/></svg>
<div class="a" style="left:801px;top:142px;width:116px;height:23px;background:#fff;border:1px solid #d0d0d0;border-radius:2px"></div>
<div class="t " style="left:805px;top:147.54px;line-height:14px;font-size:12px;letter-spacing:0.1px">Custom (customi</div>
<svg class="a" style="left:903px;top:150px" width="10" height="6" viewBox="0 0 10 6"><path d="M1 1 L5 5 L9 1" fill="none" stroke="#333" stroke-width="1"/></svg>
<svg class="a" style="left:921px;top:142px" width="14" height="13" viewBox="0 0 14 13" shape-rendering="crispEdges"><rect x="0" y="0" width="14" height="13" fill="#fff"/><rect x="1" y="1" width="12" height="1" fill="#2a90d0"/><rect x="1" y="3" width="4" height="1" fill="#8a8a8a"/><rect x="6" y="3" width="2" height="1" fill="#b8b8b8"/><rect x="9" y="3" width="4" height="1" fill="#a8a8a8"/><rect x="1" y="5" width="4" height="1" fill="#8a8a8a"/><rect x="6" y="5" width="2" height="1" fill="#b8b8b8"/><rect x="9" y="5" width="4" height="1" fill="#a8a8a8"/><rect x="1" y="7" width="4" height="1" fill="#8a8a8a"/><rect x="6" y="7" width="2" height="1" fill="#b8b8b8"/><rect x="9" y="7" width="4" height="1" fill="#a8a8a8"/><rect x="1" y="9" width="4" height="1" fill="#8a8a8a"/><rect x="6" y="9" width="2" height="1" fill="#b8b8b8"/><rect x="9" y="9" width="4" height="1" fill="#a8a8a8"/><rect x="1" y="11" width="4" height="1" fill="#8a8a8a"/><rect x="6" y="11" width="2" height="1" fill="#b8b8b8"/><rect x="9" y="11" width="4" height="1" fill="#a8a8a8"/></svg>
<div class="a" style="left:617px;top:170px;width:323px;height:20px;background:#ffffe1"></div>
<svg class="a" style="left:620px;top:173px" width="14" height="14" viewBox="0 0 14 14" shape-rendering="crispEdges"><path d="M3 0h1v1h-1zM5 0h1v1h-1zM8 0h1v1h-1zM10 0h1v1h-1zM3 13h1v1h-1zM5 13h1v1h-1zM8 13h1v1h-1zM10 13h1v1h-1zM0 3h1v1h-1zM0 5h1v1h-1zM0 8h1v1h-1zM0 10h1v1h-1zM13 3h1v1h-1zM13 5h1v1h-1zM13 8h1v1h-1zM13 10h1v1h-1z" fill="#5a5a5a"/><rect x="1" y="1" width="12" height="12" fill="#5a6aa0"/><rect x="2" y="1" width="10" height="1" fill="#3aa6c4"/><rect x="2" y="12" width="10" height="1" fill="#3aa6c4"/><rect x="2" y="2" width="10" height="10" fill="#fbfbfb"/><rect x="3" y="3" width="8" height="8" fill="#e0a818"/><rect x="4" y="4" width="6" height="6" fill="#209a20"/><rect x="5" y="5" width="4" height="4" fill="#d2e878"/><rect x="5" y="5" width="1" height="2" fill="#9fe3f5"/><rect x="6" y="7" width="2" height="1" fill="#a9dcf0"/></svg>
<div class="t b" style="left:640px;top:173.84px;line-height:14px;font-size:12px;letter-spacing:-0.107px">Suggested morphology pattern (from OpenAI)</div>
<div class="a" style="left:621px;top:194px;width:195px;height:22px;background:#fff;border-top:1px solid #a0a0a0;border-left:1px solid #a0a0a0;border-right:1px solid #fcfcfc;border-bottom:1px solid #fcfcfc"></div>
<div class="a" style="left:622px;top:195px;width:193px;height:20px;border-top:1px solid #696969;border-left:1px solid #696969;border-right:1px solid #e3e3e3;border-bottom:1px solid #e3e3e3"></div>
<div class="t " style="left:623px;top:197.84px;line-height:14px;font-size:12px;letter-spacing:0.2px">wylog<span class="hl">ować</span></div>
<div class="t " style="left:823px;top:198.84px;line-height:14px;font-size:12px;">Custom</div>
<svg class="a" style="left:919px;top:197px" width="16" height="16" viewBox="0 0 16 16" shape-rendering="crispEdges"><rect x="0" y="0" width="16" height="15" rx="2" fill="#1a78bd"/><rect x="1.5" y="1.5" width="13" height="12" fill="#fff"/><rect x="2" y="2" width="12" height="1" fill="#8ccbf0"/><rect x="2" y="3" width="12" height="1" fill="#2a92d4"/><rect x="2" y="5" width="4" height="1" fill="#8a8a8a"/><rect x="7" y="5" width="2" height="1" fill="#b8b8b8"/><rect x="10" y="5" width="4" height="1" fill="#a8a8a8"/><rect x="2" y="7" width="4" height="1" fill="#8a8a8a"/><rect x="7" y="7" width="2" height="1" fill="#b8b8b8"/><rect x="10" y="7" width="4" height="1" fill="#a8a8a8"/><rect x="2" y="9" width="4" height="1" fill="#8a8a8a"/><rect x="7" y="9" width="2" height="1" fill="#b8b8b8"/><rect x="10" y="9" width="4" height="1" fill="#a8a8a8"/><rect x="2" y="11" width="4" height="1" fill="#8a8a8a"/><rect x="7" y="11" width="2" height="1" fill="#b8b8b8"/><rect x="10" y="11" width="4" height="1" fill="#a8a8a8"/><rect x="2" y="13" width="4" height="1" fill="#8a8a8a"/><rect x="7" y="13" width="2" height="1" fill="#b8b8b8"/><rect x="10" y="13" width="4" height="1" fill="#a8a8a8"/></svg>
<div class="a" style="left:622px;top:223px;width:314px;height:22px;background:#f3f3f3;border:1px solid #e2e2e2;border-radius:4px"></div>
<div class="t" style="left:622px;width:314px;top:227px;line-height:14px;text-align:center;letter-spacing:0.1px;text-indent:-0.5px;color:#a0a0a0">Use this morphology pattern</div>
<div class="a" style="left:617px;top:257px;width:323px;height:20px;background:#ffffe1"></div>
<svg class="a" style="left:622px;top:264px" width="10" height="9" viewBox="0 0 10 9" shape-rendering="crispEdges"><rect x="0" y="0" width="3" height="9" fill="#0b650b"/><rect x="6" y="0" width="3" height="9" fill="#0b650b"/><rect x="3" y="4" width="3" height="2" fill="#0b650b"/></svg>
<div class="t b" style="left:640px;top:260.84px;line-height:14px;font-size:12px;letter-spacing:0.127px">Suggested morphology pattern (from Hunspell)</div>
<div class="a" style="left:621px;top:281px;width:195px;height:22px;background:#fff;border-top:1px solid #a0a0a0;border-left:1px solid #a0a0a0;border-right:1px solid #fcfcfc;border-bottom:1px solid #fcfcfc"></div>
<div class="a" style="left:622px;top:282px;width:193px;height:20px;border-top:1px solid #696969;border-left:1px solid #696969;border-right:1px solid #e3e3e3;border-bottom:1px solid #e3e3e3"></div>
<div class="t " style="left:623px;top:284.84px;line-height:14px;font-size:12px;letter-spacing:0.2px">wylog<span class="hl">ować</span></div>
<div class="t " style="left:823px;top:285.84px;line-height:14px;font-size:12px;">Custom</div>
<svg class="a" style="left:919px;top:284px" width="16" height="16" viewBox="0 0 16 16" shape-rendering="crispEdges"><rect x="0" y="0" width="16" height="15" rx="2" fill="#1a78bd"/><rect x="1.5" y="1.5" width="13" height="12" fill="#fff"/><rect x="2" y="2" width="12" height="1" fill="#8ccbf0"/><rect x="2" y="3" width="12" height="1" fill="#2a92d4"/><rect x="2" y="5" width="4" height="1" fill="#8a8a8a"/><rect x="7" y="5" width="2" height="1" fill="#b8b8b8"/><rect x="10" y="5" width="4" height="1" fill="#a8a8a8"/><rect x="2" y="7" width="4" height="1" fill="#8a8a8a"/><rect x="7" y="7" width="2" height="1" fill="#b8b8b8"/><rect x="10" y="7" width="4" height="1" fill="#a8a8a8"/><rect x="2" y="9" width="4" height="1" fill="#8a8a8a"/><rect x="7" y="9" width="2" height="1" fill="#b8b8b8"/><rect x="10" y="9" width="4" height="1" fill="#a8a8a8"/><rect x="2" y="11" width="4" height="1" fill="#8a8a8a"/><rect x="7" y="11" width="2" height="1" fill="#b8b8b8"/><rect x="10" y="11" width="4" height="1" fill="#a8a8a8"/><rect x="2" y="13" width="4" height="1" fill="#8a8a8a"/><rect x="7" y="13" width="2" height="1" fill="#b8b8b8"/><rect x="10" y="13" width="4" height="1" fill="#a8a8a8"/></svg>
<div class="a" style="left:622px;top:310px;width:314px;height:23px;background:#f3f3f3;border:1px solid #e2e2e2;border-radius:4px"></div>
<div class="t" style="left:622px;width:314px;top:314px;line-height:14px;text-align:center;letter-spacing:0.1px;text-indent:-0.5px;color:#a0a0a0">Use this morphology pattern</div>
<div class="a" style="left:617px;top:344px;width:323px;height:20px;background:#ffffe1"></div>
<div class="t b" style="left:619px;top:347px;line-height:16px;font-size:14.5px;letter-spacing:-0.6px;color:#0c2a8c">Tb</div>
<div class="t b" style="left:640px;top:347.84px;line-height:14px;font-size:12px;letter-spacing:-0.05px">Original morphology pattern (from term base)</div>
<div class="a" style="left:621px;top:368px;width:218px;height:22px;background:#fff;border-top:1px solid #a0a0a0;border-left:1px solid #a0a0a0;border-right:1px solid #fcfcfc;border-bottom:1px solid #fcfcfc"></div>
<div class="a" style="left:622px;top:369px;width:216px;height:20px;border-top:1px solid #696969;border-left:1px solid #696969;border-right:1px solid #e3e3e3;border-bottom:1px solid #e3e3e3"></div>
<div class="t " style="left:623px;top:371.84px;line-height:14px;font-size:12px;letter-spacing:0px">wylogować<span class="hu"></span></div>
<div class="t " style="left:847px;top:372.84px;line-height:14px;font-size:12px;letter-spacing:-0.3px">50% Prefix</div>
<div class="a" style="left:622px;top:397px;width:314px;height:23px;background:#fbfbfb;border:1px solid #cfcfcf;border-radius:4px"></div>
<div class="t" style="left:622px;width:314px;top:401px;line-height:14px;text-align:center;letter-spacing:0.1px;text-indent:-0.5px;color:#000">Use this morphology pattern</div>
<div class="a" style="left:2px;top:568px;width:938px;height:1px;background:#d7d7d7"></div>
<div class="t " style="left:7px;top:573.84px;line-height:14px;font-size:12px;letter-spacing:-0.35px">Unsaved changes</div>
<div class="a" style="left:102px;top:572px;width:1px;height:16px;background:#c8c8c8"></div>
<div class="t " style="left:110px;top:573.84px;line-height:14px;font-size:12px;">9 terms to be updated</div>
<div class="a" style="left:229px;top:572px;width:1px;height:16px;background:#c8c8c8"></div>
<div class="a" style="left:936px;top:579px;width:2px;height:2px;background:#8a8a8a"></div>
<div class="a" style="left:932px;top:583px;width:2px;height:2px;background:#8a8a8a"></div>
<div class="a" style="left:936px;top:583px;width:2px;height:2px;background:#8a8a8a"></div>
<div class="a" style="left:928px;top:587px;width:2px;height:2px;background:#8a8a8a"></div>
<div class="a" style="left:932px;top:587px;width:2px;height:2px;background:#8a8a8a"></div>
<div class="a" style="left:936px;top:587px;width:2px;height:2px;background:#8a8a8a"></div>
</body></html>
